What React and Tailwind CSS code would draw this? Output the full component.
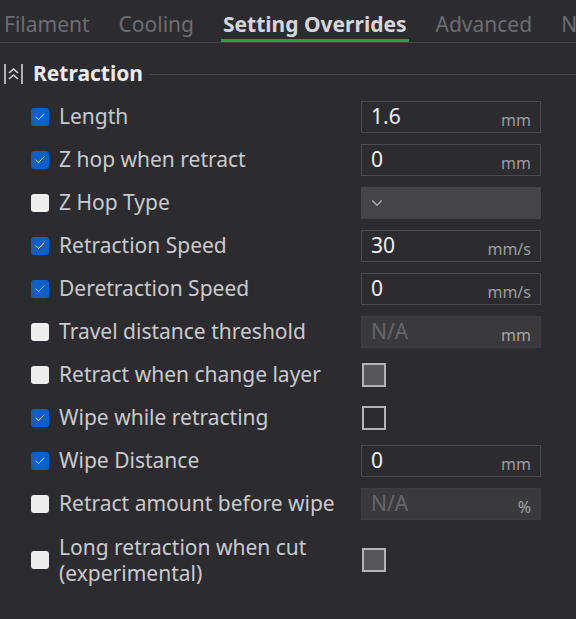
import { ChevronDown, Check } from "lucide-react";

const rows = [
  { label: "Length", checked: true, kind: "input", value: "1.6", unit: "mm" },
  { label: "Z hop when retract", checked: true, kind: "input", value: "0", unit: "mm" },
  { label: "Z Hop Type", checked: false, kind: "select" },
  { label: "Retraction Speed", checked: true, kind: "input", value: "30", unit: "mm/s" },
  { label: "Deretraction Speed", checked: true, kind: "input", value: "0", unit: "mm/s" },
  { label: "Travel distance threshold", checked: false, kind: "disabled", value: "N/A", unit: "mm" },
  { label: "Retract when change layer", checked: false, kind: "box", filled: true },
  { label: "Wipe while retracting", checked: true, kind: "box", filled: false },
  { label: "Wipe Distance", checked: true, kind: "input", value: "0", unit: "mm" },
  { label: "Retract amount before wipe", checked: false, kind: "disabled", value: "N/A", unit: "%" },
];

function CheckBox({ checked }) {
  return checked ? (
    <div className="flex h-[18px] w-[18px] shrink-0 items-center justify-center rounded-[3px] bg-[#0b5fc6]">
      <Check size={12} strokeWidth={2} className="text-white" />
    </div>
  ) : (
    <div className="h-[18px] w-[18px] shrink-0 rounded-[3px] bg-[#ededed]" />
  );
}

function Control({ row }) {
  if (row.kind === "input")
    return (
      <div className="flex h-[32px] w-[180px] items-center justify-between border border-[#4a4a50] pl-[9px] pr-[9px]">
        <span className="text-[21px] text-[#f0f0f2]">{row.value}</span>
        <span className="mt-[6px] text-[16px] text-[#9c9ca0]">{row.unit}</span>
      </div>
    );
  if (row.kind === "disabled")
    return (
      <div className="flex h-[32px] w-[180px] items-center justify-between border border-[#3e3e42] bg-[#3a3a3d] pl-[9px] pr-[9px]">
        <span className="text-[21px] text-[#66666a]">{row.value}</span>
        <span className="mt-[6px] text-[16px] text-[#a6a6aa]">{row.unit}</span>
      </div>
    );
  if (row.kind === "select")
    return (
      <div className="flex h-[32px] w-[180px] items-center bg-[#454548] pl-[7px]">
        <ChevronDown size={18} strokeWidth={1.5} className="text-[#b8b8bc]" />
      </div>
    );
  return (
    <div
      className={
        "ml-[1px] h-[24px] w-[24px] border-2 border-[#b4b4b8] " +
        (row.filled ? "bg-[#57575b]" : "bg-transparent")
      }
    />
  );
}

export default function App() {
  const tabs = ["Filament", "Cooling", "Setting Overrides", "Advanced", "N"];
  return (
    <div
      className="h-[619px] w-[576px] overflow-hidden bg-[#2c2c30] text-[#cacacd]"
      style={{ fontFamily: '"Noto Sans", "Open Sans", sans-serif' }}
    >
      {/* Tabs */}
      <div className="flex h-[43px] items-end gap-[29px] overflow-hidden whitespace-nowrap border-b border-[#444448] pl-[4px]">
        {tabs.map((t) => {
          const active = t === "Setting Overrides";
          return (
            <div
              key={t}
              className={
                "text-[21px] leading-[30px] " +
                (active
                  ? "border-b-[3px] border-[#16a34a] font-bold text-[#d6d6da] px-[2px] -mx-[2px]"
                  : "border-b-[3px] border-transparent text-[#6c6c71]")
              }
            >
              {t}
            </div>
          );
        })}
      </div>

      {/* Section header */}
      <div className="mt-[19px] flex h-[24px] items-center pl-[4px]">
        <svg width="19" height="22" viewBox="0 0 19 22" fill="none" stroke="#d4d4d8" strokeWidth="1.6">
          <line x1="1" y1="1" x2="1" y2="21" />
          <line x1="18" y1="1" x2="18" y2="21" />
          <polyline points="5,10 9.5,6 14,10" />
          <polyline points="5,16 9.5,12 14,16" />
        </svg>
        <span className="ml-[10px] text-[21px] font-bold text-[#ececef]">Retraction</span>
        <div className="ml-[6px] h-px flex-1 bg-[#48484c]" />
      </div>

      {/* Rows */}
      <div className="mt-[9px] flex flex-col pl-[31px]">
        {rows.map((r) => (
          <div key={r.label} className="flex h-[43px] items-center">
            <CheckBox checked={r.checked} />
            <span className="ml-[10px] w-[302px] whitespace-nowrap text-[21px]">{r.label}</span>
            <Control row={r} />
          </div>
        ))}
        <div className="mt-[5px] flex h-[60px] items-center">
          <CheckBox checked={false} />
          <span className="ml-[10px] w-[302px] text-[21px] leading-[26px]">
            Long retraction when cut
            <br />
            (experimental)
          </span>
          <Control row={{ kind: "box", filled: true }} />
        </div>
      </div>
    </div>
  );
}
